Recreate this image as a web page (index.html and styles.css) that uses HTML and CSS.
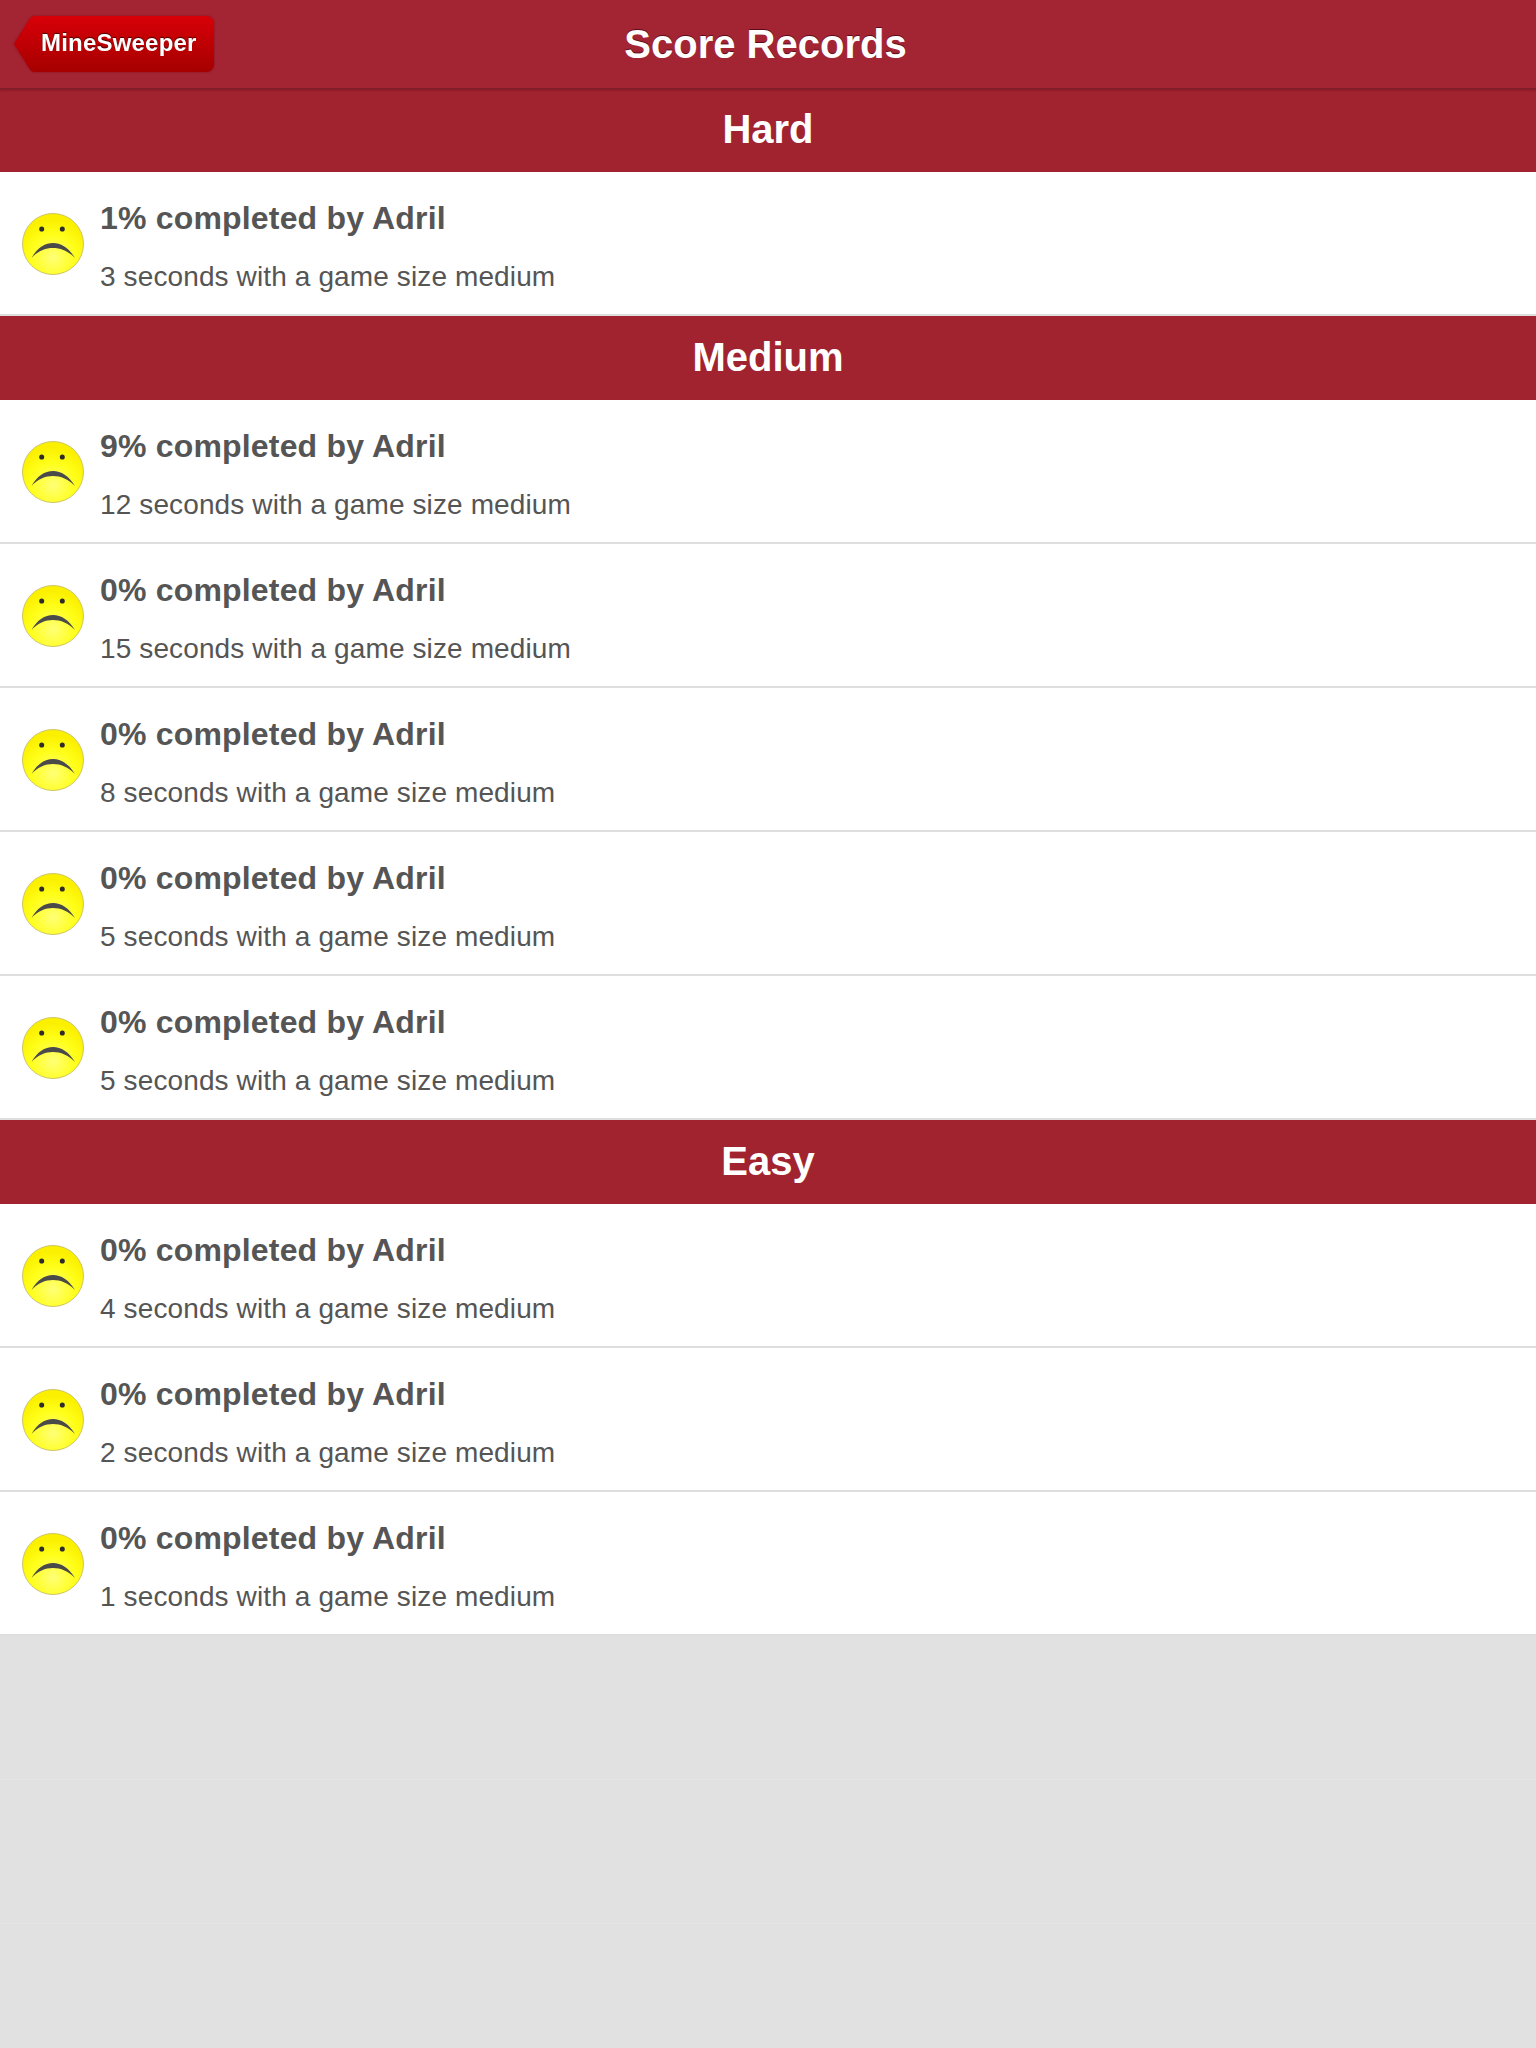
FILE: index.html
```html
<!DOCTYPE html>
<html>
  <head>
    <meta charset="utf-8">
    <title>Score Records</title>
    <link rel="stylesheet" href="styles.css">
  </head>
  <body>
    <svg class="defs" width="0" height="0">
      <defs>
        <radialGradient id="face" cx="50%" cy="72%" r="62%">
          <stop offset="0" stop-color="#ffff78"/>
          <stop offset="0.6" stop-color="#ffff1a"/>
          <stop offset="1" stop-color="#fbf000"/>
        </radialGradient>
        <symbol id="sad" viewBox="0 0 64 64">
          <circle cx="32" cy="32" r="30.5" fill="url(#face)" stroke="#cfc56a" stroke-width="1"/>
          <ellipse cx="20.700" cy="17" rx="2.500" ry="2.600" fill="#2c2c2c"/>
          <ellipse cx="41.300" cy="17" rx="2.500" ry="2.600" fill="#2c2c2c"/>
          <path d="M10.500 46 C16 36 24 31 32 31 C40 31 48 36 54 46 C47 39 40 36 32 36 C24 36 17 39 10.500 46 Z" fill="#4a4a4a"/>
        </symbol>
      </defs>
    </svg>

    <header class="navbar">
      <a class="back" href="#">
        <svg class="back-arrow" width="22" height="56" viewBox="0 0 22 56">
          <defs>
            <linearGradient id="backfill" x1="0" y1="0" x2="0" y2="1">
              <stop offset="0" stop-color="#d80008"/>
              <stop offset="1" stop-color="#a50000"/>
            </linearGradient>
          </defs>
          <path d="M22 0 L21 0 Q18 0 16 2.500 L0 28 L16 53.500 Q18 56 21 56 L22 56 Z" fill="url(#backfill)"/>
        </svg>
        <span class="back-body">MineSweeper</span>
      </a>
      <h1>Score Records</h1>
    </header>

    <h2 class="section">Hard</h2>
    <ul class="rows">
      <li class="row">
        <svg class="face" width="64" height="64"><use href="#sad"/></svg>
        <div class="row-text">
          <h3>1% completed by Adril</h3>
          <p>3 seconds with a game size medium</p>
        </div>
      </li>
    </ul>

    <h2 class="section">Medium</h2>
    <ul class="rows">
      <li class="row">
        <svg class="face" width="64" height="64"><use href="#sad"/></svg>
        <div class="row-text">
          <h3>9% completed by Adril</h3>
          <p>12 seconds with a game size medium</p>
        </div>
      </li>
      <li class="row">
        <svg class="face" width="64" height="64"><use href="#sad"/></svg>
        <div class="row-text">
          <h3>0% completed by Adril</h3>
          <p>15 seconds with a game size medium</p>
        </div>
      </li>
      <li class="row">
        <svg class="face" width="64" height="64"><use href="#sad"/></svg>
        <div class="row-text">
          <h3>0% completed by Adril</h3>
          <p>8 seconds with a game size medium</p>
        </div>
      </li>
      <li class="row">
        <svg class="face" width="64" height="64"><use href="#sad"/></svg>
        <div class="row-text">
          <h3>0% completed by Adril</h3>
          <p>5 seconds with a game size medium</p>
        </div>
      </li>
      <li class="row">
        <svg class="face" width="64" height="64"><use href="#sad"/></svg>
        <div class="row-text">
          <h3>0% completed by Adril</h3>
          <p>5 seconds with a game size medium</p>
        </div>
      </li>
    </ul>

    <h2 class="section">Easy</h2>
    <ul class="rows">
      <li class="row">
        <svg class="face" width="64" height="64"><use href="#sad"/></svg>
        <div class="row-text">
          <h3>0% completed by Adril</h3>
          <p>4 seconds with a game size medium</p>
        </div>
      </li>
      <li class="row">
        <svg class="face" width="64" height="64"><use href="#sad"/></svg>
        <div class="row-text">
          <h3>0% completed by Adril</h3>
          <p>2 seconds with a game size medium</p>
        </div>
      </li>
      <li class="row">
        <svg class="face" width="64" height="64"><use href="#sad"/></svg>
        <div class="row-text">
          <h3>0% completed by Adril</h3>
          <p>1 seconds with a game size medium</p>
        </div>
      </li>
    </ul>

    <!-- empty table rows below the list -->
    <div class="filler"></div>
    <div class="filler"></div>
    <div class="filler last"></div>
  </body>
</html>
```

FILE: styles.css
```css
html, body {
  margin: 0;
  padding: 0;
}
body {
  width: 1536px;
  height: 2048px;
  overflow: hidden;
  background: #e1e1e1;
  font-family: "Liberation Sans", Arial, sans-serif;
}
.defs {
  position: absolute;
}
.navbar {
  position: relative;
  z-index: 1;
  height: 88px;
  box-sizing: border-box;
  padding-right: 5px;
  background: #a32433;
  box-shadow: 0 1px 0 #7c1f2a, 0 2px 2px rgba(80, 10, 20, 0.45);
  display: flex;
  align-items: center;
  justify-content: center;
}
.navbar h1 {
  margin: 0;
  color: #fff;
  font-size: 40px;
  font-weight: bold;
  line-height: 87px;
  text-shadow: 0 -1px 0 rgba(60, 0, 10, 0.7);
}
.back {
  position: absolute;
  left: 14px;
  top: 16px;
  display: flex;
  height: 56px;
  color: #fff;
  text-decoration: none;
  filter: drop-shadow(0 0 1px #8c0d18);
}
.back-arrow {
  display: block;
}
.back-body {
  height: 56px;
  box-sizing: border-box;
  padding: 0 17px 0 5px;
  line-height: 54px;
  font-size: 24px;
  font-weight: bold;
  letter-spacing: 0.2px;
  background: linear-gradient(#d80008, #a50000);
  border-radius: 0 8px 8px 0;
  text-shadow: 0 -1px 1px #400;
}
.section {
  margin: 0;
  height: 84px;
  background: #a1232f;
  color: #fff;
  text-align: center;
  font-size: 40px;
  font-weight: bold;
  line-height: 83px;
}
.rows {
  margin: 0;
  padding: 0;
  list-style: none;
}
.row {
  height: 144px;
  box-sizing: border-box;
  background: #fff;
  border-bottom: 2px solid #dedede;
  display: flex;
  align-items: center;
  padding-left: 21px;
}
.face {
  flex: none;
  margin: 2px 15px 0 0;
}
.row-text {
  padding-top: 5px;
}
.row-text h3 {
  margin: 0;
  color: #555;
  font-size: 32px;
  font-weight: bold;
  line-height: 40px;
  letter-spacing: 0.18px;
}
.row-text p {
  margin: 22px 0 0;
  color: #555;
  font-size: 28px;
  line-height: 34px;
  letter-spacing: 0.12px;
}
.filler {
  height: 144px;
  box-sizing: border-box;
  border-bottom: 1px solid #e4e4e4;
}
.last {
  border-bottom: 0;
}
```
